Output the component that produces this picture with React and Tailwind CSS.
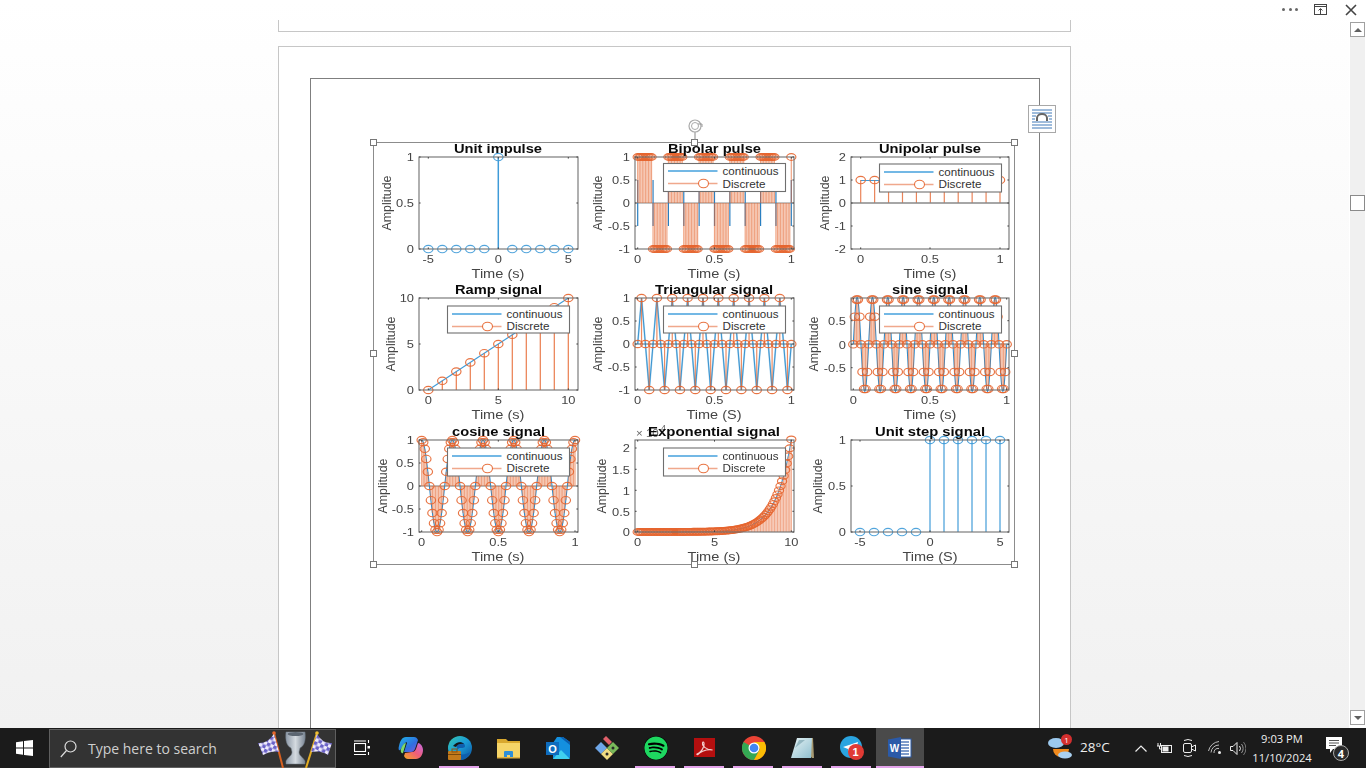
import React from "react";
import { FaSpotify } from "react-icons/fa";

const BLUE = "#3f9bd8";
const OR = "#e5652f";
const GREY = "#454545";
const range = (n, f) => Array.from({ length: n }, (_, i) => f(i));

function T({ x, y, len, size = 12, bold, anchor = "middle", fill = GREY, rot, sx, children }) {
  let transform;
  if (rot) transform = `translate(${x} ${y}) rotate(-90)`;
  else if (sx) transform = `translate(${x} ${y}) scale(${sx} 1)`;
  const zero = rot || sx;
  return (
    <text
      x={zero ? 0 : x}
      y={zero ? 0 : y}
      transform={transform}
      textLength={len}
      lengthAdjust={len ? "spacingAndGlyphs" : undefined}
      textAnchor={anchor}
      fontSize={size}
      fontWeight={bold ? 700 : 400}
      fill={fill}
      fontFamily="'Liberation Sans', Arial, sans-serif"
    >
      {children}
    </text>
  );
}

function Stems({ pts, base, color = OR, o = 0.6, rx = 4.7, ry = 3.7, w = 1.2, noStem }) {
  return (
    <g>
      {!noStem &&
        pts.map(([x, y], i) => (
          <line key={i} x1={x} x2={x} y1={base} y2={y} stroke={color} strokeWidth={w} strokeOpacity={o} />
        ))}
      {pts.map(([x, y], i) => (
        <ellipse key={"m" + i} cx={x} cy={y} rx={rx} ry={ry} fill="none" stroke={color} strokeWidth={1.15} strokeOpacity={0.9} />
      ))}
    </g>
  );
}

function Legend({ x, y, w = 122, h = 28, gap = 12.5 }) {
  const ly = Math.round(y + 7.5);
  return (
    <g>
      <rect x={x} y={y} width={w} height={h} fill="#fff" stroke="#6f6f6f" strokeWidth={1.1} />
      <line x1={x + 4.5} x2={x + 54} y1={ly} y2={ly} stroke="#45a0dc" strokeWidth={1.4} />
      <line x1={x + 4.5} x2={x + 54} y1={ly + gap} y2={ly + gap} stroke="#f0a88c" strokeWidth={1.4} />
      <ellipse cx={x + 40} cy={ly + gap} rx={5} ry={4.2} fill="#fff" stroke={OR} strokeOpacity={0.9} strokeWidth={1.1} />
      <T x={x + 59} y={y + 11.5} size={11} len={56} anchor="start" fill="#333">continuous</T>
      <T x={x + 59} y={y + 11.5 + gap} size={11} len={43} anchor="start" fill="#333">Discrete</T>
    </g>
  );
}

function Axes({ l, r, t, b, xt, yt, title, tLen, tc, tY, xLabel, xLen, xc, ampX, children }) {
  const W = r - l;
  return (
    <g>
      {children}
      <rect x={l} y={t} width={W} height={b - t} fill="none" stroke="#6f6f6f" strokeWidth={1.1} />
      {xt.map(([x], i) => (
        <g key={i}>
          <line x1={x} x2={x} y1={b} y2={b - 1.6} stroke="#444" />
          <line x1={x} x2={x} y1={t} y2={t + 1.6} stroke="#444" />
        </g>
      ))}
      {yt.map(([y], i) => (
        <g key={i}>
          <line x1={l} x2={l + 1.6} y1={y} y2={y} stroke="#444" />
          <line x1={r} x2={r - 1.6} y1={y} y2={y} stroke="#444" />
        </g>
      ))}
      {xt.map(([x, s], i) => (
        <T key={i} x={x} y={b + 14} size={11.5} sx={1.12}>{s}</T>
      ))}
      {yt.map(([y, s], i) => (
        <T key={i} x={l - 5} y={y + 4.2} size={11.5} sx={1.12} anchor="end">{s}</T>
      ))}
      <T x={tc} y={tY} size={12.5} bold len={tLen} fill="#0a0a0a">{title}</T>
      <T x={xc} y={b + 28.5} size={12.5} len={xLen}>{xLabel}</T>
      <T x={ampX} y={(t + b) / 2} size={12.8} len={55} rot>Amplitude</T>
    </g>
  );
}

const T01 = 153.6;
const col2x = (v) => 637.7 + v * T01;
const xt01c2 = [[637.7, "0"], [714.5, "0.5"], [791.3, "1"]];
const yt1 = (t) => [[t, "1"], [t + 23, "0.5"], [t + 46, "0"], [t + 69, "-0.5"], [t + 92, "-1"]];

function Figure() {
  const bip = range(101, (k) => [col2x(k / 100), k % 20 < 10 ? 157 : 249]);
  const tri = range(41, (k) => {
    const v = [0, 1, 0, -1][k % 4];
    return [col2x(k * 0.025), 344 - v * 46];
  });
  const sx = (v) => 853.3 + v * 153.4;
  const sin = range(101, (k) => [sx(k / 100), 344.3 - Math.sin(2 * Math.PI * 10 * (k / 100)) * 47]);
  const sinLine = range(401, (k) => [sx(k / 400), 344.3 - Math.sin(2 * Math.PI * 10 * (k / 400)) * 47]);
  const cx = (v) => 421.7 + v * 153.3;
  const cos = range(101, (k) => [cx(k / 100), 486 - Math.cos(2 * Math.PI * 5 * (k / 100)) * 46]);
  const cosLine = range(401, (k) => [cx(k / 400), 486 - Math.cos(2 * Math.PI * 5 * (k / 400)) * 46]);
  const ex = range(101, (k) => [637.7 + (k / 10) * 15.36, 532 - (Math.exp(k / 10) / 1e4) * 42]);
  const poly = (p) => p.map((q) => q.join(",")).join(" ");

  return (
    <svg viewBox="373 142 642 423" className="block w-full h-full blur-[0.3px]">
      <Axes l={419} r={578} t={157} b={249} tc={498} tY={153} title="Unit impulse" tLen={88}
        xt={[[428.3, "-5"], [498.3, "0"], [568.3, "5"]]} yt={[[157, "1"], [203, "0.5"], [249, "0"]]}
        xLabel="Time (s)" xLen={53} xc={498} ampX={390.5}>
        <Stems color={BLUE} noStem pts={range(11, (i) => [428.3 + i * 14, i === 5 ? 157 : 249])} />
        <line x1={498.3} x2={498.3} y1={157} y2={249} stroke={BLUE} strokeWidth={1.5} />
      </Axes>

      <Axes l={635} r={794} t={157} b={249} tc={714.5} tY={153} title="Bipolar pulse" tLen={93}
        xt={xt01c2} yt={yt1(157)} xLabel="Time (s)" xLen={53} xc={714} ampX={602}>
        <line x1={635} x2={794} y1={203} y2={203} stroke="#888" />
        {range(11, (i) => (
          <line key={i} x1={col2x(i / 10)} x2={col2x(i / 10)} y1={180} y2={226} stroke="#2a7fc0" strokeWidth={1.2} />
        ))}
        <Stems pts={bip} base={203} o={0.6} rx={4.6} ry={3.4} />
        <ellipse cx={676} cy={157} rx={4} ry={3} fill={OR} />
        <ellipse cx={752} cy={249} rx={3} ry={3} fill={OR} />
        <Legend x={663.5} y={163.5} />
      </Axes>

      <Axes l={851} r={1009} t={157} b={249} tc={930} tY={153} title="Unipolar pulse" tLen={102}
        xt={[[860.7, "0"], [930, "0.5"], [1000, "1"]]}
        yt={[[157, "2"], [180, "1"], [203, "0"], [226, "-1"], [249, "-2"]]}
        xLabel="Time (s)" xLen={53} xc={930} ampX={828.5}>
        <line x1={860.7} x2={1000} y1={180.5} y2={180.5} stroke={BLUE} />
        <Stems pts={range(11, (i) => [860.7 + i * 13.93, 180])} base={203} o={0.8} />
        <line x1={851} x2={1009} y1={203} y2={203} stroke="#888" strokeWidth={1.4} />
        <Legend x={879.5} y={164} />
      </Axes>

      <Axes l={419} r={578} t={298} b={390} tc={498.5} tY={294} title="Ramp signal" tLen={87}
        xt={[[428.3, "0"], [498.3, "5"], [568.3, "10"]]} yt={[[298, "10"], [344, "5"], [390, "0"]]}
        xLabel="Time (s)" xLen={53} xc={498} ampX={395}>
        <line x1={428.3} x2={568.3} y1={390} y2={298} stroke={BLUE} strokeWidth={1.1} />
        <Stems pts={range(11, (i) => [428.3 + i * 14, 390 - i * 9.2])} base={390} o={0.85} />
        <Legend x={447.5} y={306} h={27} />
      </Axes>

      <Axes l={635} r={794} t={298} b={390} tc={714} tY={294} title="Triangular signal" tLen={118}
        xt={xt01c2} yt={yt1(298)} xLabel="Time (S)" xLen={55} xc={714} ampX={602}>
        <polyline points={poly(tri)} fill="none" stroke="#a9d4ef" strokeWidth={1.8} />
        <polyline points={poly(tri)} fill="none" stroke="#2f8ccb" strokeWidth={0.9} />
        <line x1={635} x2={794} y1={344} y2={344} stroke="#4a6a80" />
        <Stems pts={tri} base={344} o={0.75} />
        <Legend x={663.5} y={306} h={27} />
      </Axes>

      <Axes l={851} r={1009} t={298} b={390} tc={930} tY={294} title="sine signal" tLen={76}
        xt={[[853.3, "0"], [930, "0.5"], [1006.7, "1"]]}
        yt={[[320.7, "0.5"], [344.3, "0"], [367.7, "-0.5"]]}
        xLabel="Time (s)" xLen={53} xc={930} ampX={818}>
        <polyline points={poly(sinLine)} fill="none" stroke="#2f8ccb" strokeWidth={1.1} />
        <line x1={851} x2={1009} y1={344} y2={344} stroke="#666" />
        <Stems pts={sin} base={344.3} o={0.6} />
        <Legend x={879.5} y={306} h={27} />
      </Axes>

      <Axes l={419} r={578} t={440} b={532} tc={498.5} tY={435.5} title="cosine signal" tLen={93}
        xt={[[421.7, "0"], [498.3, "0.5"], [575, "1"]]} yt={yt1(440)}
        xLabel="Time (s)" xLen={53} xc={498} ampX={386.5}>
        <polyline points={poly(cosLine)} fill="none" stroke="#2f8ccb" strokeWidth={1.1} />
        <line x1={419} x2={578} y1={486} y2={486} stroke="#777" />
        <Stems pts={cos} base={486} o={0.6} />
        <Legend x={447.5} y={448} />
      </Axes>

      <Axes l={635} r={794} t={440} b={532} tc={714} tY={435.5} title="Exponential signal" tLen={132}
        xt={[[637.7, "0"], [714.5, "5"], [791.3, "10"]]}
        yt={[[448, "2"], [469.3, "1.5"], [490.3, "1"], [511.3, "0.5"], [532, "0"]]}
        xLabel="Time (s)" xLen={53} xc={714} ampX={606}>
        <T x={636} y={437} size={11.5} anchor="start" fill="#666">× 10</T>
        <T x={661} y={431} size={9} anchor="start" fill="#666">4</T>
        <polyline points={poly(ex)} fill="none" stroke={BLUE} strokeWidth={1.1} />
        <Stems pts={ex} base={532} o={0.55} rx={4.6} ry={3.4} />
        <ellipse cx={675} cy={532} rx={3.5} ry={3.2} fill={OR} />
        <Legend x={663.5} y={448} />
      </Axes>

      <Axes l={851} r={1009} t={440} b={532} tc={930} tY={435.5} title="Unit step signal" tLen={110}
        xt={[[860, "-5"], [930, "0"], [1000, "5"]]} yt={[[440, "1"], [486, "0.5"], [532, "0"]]}
        xLabel="Time (S)" xLen={55} xc={930} ampX={822}>
        <Stems color={BLUE} o={0.9} base={532} pts={range(11, (i) => [860 + i * 14, i < 5 ? 532 : 440])} w={1.3} />
      </Axes>
    </svg>
  );
}

const handle = "absolute w-[7px] h-[7px] bg-white border border-[#777]";

function Picture() {
  return (
    <div className="relative w-[642px] h-[423px] border border-[#8c8c8c]">
      <div className="absolute -inset-px">
        <Figure />
      </div>
      <div className={handle + " -left-[4px] -top-[4px]"} />
      <div className={handle + " left-[317px] -top-[4px]"} />
      <div className={handle + " left-[637px] -top-[4px]"} />
      <div className={handle + " -left-[4px] top-[207px]"} />
      <div className={handle + " left-[637px] top-[207px]"} />
      <div className={handle + " -left-[4px] top-[418px]"} />
      <div className={handle + " left-[317px] top-[418px]"} />
      <div className={handle + " left-[637px] top-[418px]"} />
      <svg className="absolute left-[312px] -top-[25px]" width="18" height="22" viewBox="0 0 18 22" fill="none">
        <line x1="9" y1="14" x2="9" y2="22" stroke="#888" />
        <circle cx="9" cy="8" r="6" stroke="#aaa" strokeWidth="1.2" />
        <circle cx="9" cy="8" r="3.5" stroke="#aaa" />
        <path d="M12 6h4v3" stroke="#999" />
      </svg>
      <div className="absolute left-[654px] -top-[38px] w-[28px] h-[28px] bg-white border border-[#a8a8a8] flex items-center justify-center">
        <svg width="20" height="20" viewBox="0 0 20 20">
          {[1, 4, 13, 16, 19].map((y) => (
            <line key={y} x1="0" x2="20" y1={y} y2={y} stroke="#3f78b8" />
          ))}
          <line x1="0" x2="4" y1="7" y2="7" stroke="#3f78b8" />
          <line x1="16" x2="20" y1="7" y2="7" stroke="#3f78b8" />
          <line x1="0" x2="3" y1="10" y2="10" stroke="#3f78b8" />
          <line x1="17" x2="20" y1="10" y2="10" stroke="#3f78b8" />
          <path d="M5 12V9a5 4 0 0 1 10 0v3" fill="none" stroke="#666" strokeWidth="2" />
        </svg>
      </div>
    </div>
  );
}

function Scrollbar() {
  const btn = "w-[15px] h-[15px] bg-white border border-[#a0a0a0] flex items-center justify-center";
  return (
    <div className="w-[17px] pt-[22px] pb-[3px] pl-px pr-px flex flex-col bg-white">
      <div className="flex-1 bg-[#f0f0f0] flex flex-col">
        <div className={btn}>
          <div className="w-0 h-0 border-x-[4px] border-x-transparent border-b-[4px] border-b-[#606060]" />
        </div>
        <div className="mt-[158px] w-[15px] h-[16px] bg-white border border-[#8a8a8a]" />
        <div className="flex-1" />
        <div className={btn}>
          <div className="w-0 h-0 border-x-[4px] border-x-transparent border-t-[4px] border-t-[#606060]" />
        </div>
      </div>
    </div>
  );
}

function WinButtons() {
  return (
    <div className="absolute right-[9px] top-[3px] flex items-center">
      <div className="flex gap-[3.5px] mr-[16px]">
        <div className="w-[3px] h-[3px] rounded-full bg-[#666]" />
        <div className="w-[3px] h-[3px] rounded-full bg-[#666]" />
        <div className="w-[3px] h-[3px] rounded-full bg-[#666]" />
      </div>
      <svg className="mr-[17px]" width="14" height="13" viewBox="0 0 14 13" fill="none" stroke="#444">
        <rect x="0.5" y="1.5" width="12" height="10" />
        <line x1="0.5" y1="3.5" x2="12.5" y2="3.5" />
        <path d="M6.5 11V6M4.5 7.5l2-2 2 2" />
      </svg>
      <svg width="12" height="12" viewBox="0 0 12 12" stroke="#444" strokeWidth="1.6">
        <path d="M1 1l10 10M11 1L1 11" />
      </svg>
    </div>
  );
}

function Trophy() {
  return (
    <svg width="74" height="38" viewBox="0 0 74 38" className="shrink-0">
      <defs>
        <pattern id="chk" width="7" height="7" patternUnits="userSpaceOnUse" patternTransform="rotate(25)">
          <rect width="7" height="7" fill="#eeebfb" />
          <rect width="3.5" height="3.5" fill="#6a62c8" />
          <rect x="3.5" y="3.5" width="3.5" height="3.5" fill="#6a62c8" />
        </pattern>
        <linearGradient id="cup" x1="0" x2="1">
          <stop offset="0" stopColor="#8c98a6" />
          <stop offset="0.5" stopColor="#d4dae0" />
          <stop offset="1" stopColor="#7a8694" />
        </linearGradient>
      </defs>
      <line x1="16" y1="3" x2="25" y2="38" stroke="#d9601f" strokeWidth="2" />
      <circle cx="16" cy="3" r="1.8" fill="#e9662a" />
      <path d="M16 4 L21 22 Q13 20 5 25 L0 13 Q9 14 16 4Z" fill="url(#chk)" />
      <line x1="59" y1="3" x2="48" y2="38" stroke="#e2ac22" strokeWidth="2" />
      <circle cx="59" cy="3" r="1.8" fill="#f0c030" />
      <path d="M59 4 L53 22 Q63 20 70 25 L74 13 Q65 14 59 4Z" fill="url(#chk)" />
      <path d="M28 2h19c1 9-1 14-5 16l-1 4c0 4 4 5 6 9v3H28v-3c2-4 6-5 6-9l-1-4c-4-2-6-7-5-16z" fill="url(#cup)" stroke="#6d7884" strokeWidth="0.5" />
      <ellipse cx="37.500" cy="4" rx="8" ry="2" fill="#5c6672" />
    </svg>
  );
}

function Copilot() {
  return (
    <svg width="26" height="24" viewBox="0 0 26 24">
      <defs>
        <linearGradient id="cpa" x1="0" y1="0" x2="1" y2="1">
          <stop offset="0" stopColor="#1fb6e8" />
          <stop offset="0.6" stopColor="#2f6fe0" />
          <stop offset="1" stopColor="#7a5be0" />
        </linearGradient>
        <linearGradient id="cpb" x1="0" y1="1" x2="1" y2="0">
          <stop offset="0" stopColor="#f5a623" />
          <stop offset="0.5" stopColor="#ef5d78" />
          <stop offset="1" stopColor="#c46be8" />
        </linearGradient>
      </defs>
      <path d="M8 1h8c2 0 3 1 4 3l-3 9c-1 2-2 3-4 3H6l3-9C9 5 6 7 3 13c-2 3-3 0-2-3 1-5 3-9 7-9z" fill="url(#cpa)" />
      <path d="M18 23h-8c-2 0-3-1-4-3l1-3 7-1c2 0 3-1 4-3l2-6c2 0 5 3 5 7 0 5-3 9-7 9z" fill="url(#cpb)" />
      <path d="M3 13c1-3 3-6 5-6l-3 10c-1 1-3-1-2-4z" fill="#7fd96a" />
    </svg>
  );
}

function Edge() {
  return (
    <svg width="25" height="25" viewBox="0 0 25 25">
      <defs>
        <linearGradient id="edg" x1="0" y1="0" x2="1" y2="1">
          <stop offset="0" stopColor="#36c7b0" />
          <stop offset="0.5" stopColor="#1a9bd7" />
          <stop offset="1" stopColor="#0b4f9c" />
        </linearGradient>
      </defs>
      <circle cx="13" cy="12" r="12" fill="url(#edg)" />
      <path d="M9 8c3-3 9-2 9 2 0 2-3 2-5 2-3 0-3 4 0 6 3 1 7 0 10-2-1 4-5 8-10 8" fill="#0f5fae" />
      <path d="M6 10c3-4 8-5 11-2-3-1-7 0-8 3z" fill="#151515" />
      <rect x="1" y="15" width="13" height="9" rx="1" fill="#c47a1a" />
      <rect x="5" y="13" width="5" height="3" fill="none" stroke="#8a5410" />
      <rect x="1" y="18" width="13" height="1" fill="#7a4a0c" />
    </svg>
  );
}

function Folder() {
  return (
    <svg width="23" height="21" viewBox="0 0 23 21">
      <path d="M0 1h9l2 2h12v17H0z" fill="#d9a82e" />
      <rect x="0" y="5" width="23" height="15" fill="#f6d568" />
      <path d="M7 20v-6a1 1 0 0 1 1-1h7a1 1 0 0 1 1 1v6h-3v-3h-3v3z" fill="#2f8fd8" />
      <rect x="0" y="19" width="23" height="1.5" fill="#e0b040" />
    </svg>
  );
}

function Outlook() {
  return (
    <svg width="24" height="23" viewBox="0 0 24 23">
      <path d="M11 0h6l7 5v15a2 2 0 0 1-2 2H7V6z" fill="#1490df" />
      <path d="M14 0h3l7 5v3z" fill="#0a5fb0" />
      <path d="M7 22l8-9 9 9z" fill="#3fd0ef" />
      <rect x="0" y="5" width="13" height="13" fill="#0f6cbd" />
      <text x="6.5" y="15.5" textAnchor="middle" fontSize="11" fontWeight="700" fill="#fff" fontFamily="'Liberation Sans', sans-serif">O</text>
    </svg>
  );
}

function Tiles() {
  return (
    <svg width="24" height="24" viewBox="0 0 24 24">
      <path d="M6 6l6 6-6 6-6-6z" fill="#6ea6e8" />
      <path d="M12 12l6 6-6 6-6-6z" fill="#f0dc82" />
      <path d="M18 6l6 6-6 6-6-6z" fill="#7ab85a" />
      <path d="M8 3l3-3 6 6-3 3z" fill="#e0606a" />
      <circle cx="18" cy="12" r="1.5" fill="#2a2a2a" />
      <circle cx="12" cy="18" r="1.5" fill="#2a2a2a" />
    </svg>
  );
}

function Acrobat() {
  return (
    <svg width="22" height="20" viewBox="0 0 22 20">
      <rect width="21" height="19" fill="#b40f0f" />
      <path d="M3 16c3-1 6-5 7-9 .5-3-1-4-1.5-2-.5 3 4 7 10 7-3-1-9 0-13 3-2 2-3 2-2.500 1z" fill="none" stroke="#f3d0d0" strokeWidth="1.1" />
    </svg>
  );
}

function Chrome() {
  return (
    <svg width="24" height="24" viewBox="0 0 24 24">
      <circle cx="12" cy="12" r="12" fill="#ea4335" />
      <path d="M12 12 L1.600 6 A12 12 0 0 0 12 24 L18 13z" fill="#34a853" />
      <path d="M12 6 H22.400 A12 12 0 0 1 12 24 L18 13z" fill="#fbbc04" />
      <circle cx="12" cy="12" r="5.500" fill="#fff" />
      <circle cx="12" cy="12" r="4.300" fill="#4285f4" />
    </svg>
  );
}

function Notes() {
  return (
    <svg width="24" height="22" viewBox="0 0 24 22">
      <defs>
        <linearGradient id="nt" x1="0" y1="0" x2="1" y2="1">
          <stop offset="0" stopColor="#e7f3f5" />
          <stop offset="1" stopColor="#8fbfcf" />
        </linearGradient>
      </defs>
      <path d="M6 1h16l1 20-2 0z" fill="#a79a72" />
      <path d="M6 1h15l-1 20H0z" fill="url(#nt)" />
      <path d="M4 11L8 3h6z" fill="#5f8d9c" fillOpacity="0.5" />
    </svg>
  );
}

function Telegram() {
  return (
    <div className="relative w-[24px] h-[24px]">
      <svg width="22" height="22" viewBox="0 0 22 22">
        <circle cx="11" cy="11" r="11" fill="#2aa4e0" />
        <path d="M3 11l15-5-3 12-4-3-2 2-1-4z" fill="#fff" />
      </svg>
      <div className="absolute left-[8px] top-[8px] w-[16px] h-[16px] rounded-full bg-[#e03a34] text-white text-[11px] font-bold flex items-center justify-center font-['Liberation_Sans']">1</div>
    </div>
  );
}

function Word() {
  return (
    <svg width="24" height="22" viewBox="0 0 24 22">
      <rect x="10" y="2" width="13" height="18" fill="#fff" stroke="#2b5aa8" />
      {[5, 8, 11, 14, 17].map((y) => (
        <line key={y} x1="13" x2="21" y1={y} y2={y} stroke="#2b5aa8" strokeWidth="1.2" />
      ))}
      <path d="M0 2.500L13 0v22L0 19.500z" fill="#2b5aa8" />
      <text x="6.500" y="15" textAnchor="middle" fontSize="10" fontWeight="700" fill="#fff" fontFamily="'Liberation Sans', sans-serif">W</text>
    </svg>
  );
}

function TaskBtn({ on, active, children, w = "w-[49px]" }) {
  return (
    <div className={"relative h-10 flex items-center justify-center shrink-0 " + w + (active ? " bg-[#4a4a4a]" : "")}>
      {children}
      {on && <div className={"absolute bottom-0 h-[2px] bg-[#e3a3ea] " + (active ? "inset-x-0" : "left-[4px] right-[5px]")} />}
    </div>
  );
}

function Taskbar() {
  return (
    <div className="h-10 shrink-0 bg-[#1b1b1b] flex items-center text-white font-['Open_Sans',sans-serif]">
      <div className="w-[49px] h-10 flex items-center justify-center shrink-0">
        <svg width="17" height="16" viewBox="0 0 17 16" fill="#fff">
          <path d="M0 2.300L7 1.300V7.500H0zM8 1.100L17 0V7.500H8zM0 8.500H7V14.700L0 13.700zM8 8.500H17V16L8 14.900z" />
        </svg>
      </div>
      <div className="w-[287px] h-[39px] mt-px shrink-0 bg-[#333333] border border-[#5f5f5f] flex items-center">
        <svg className="ml-[10px]" width="17" height="18" viewBox="0 0 17 18" fill="none" stroke="#ddd" strokeWidth="1.2">
          <circle cx="10.500" cy="6.500" r="5.500" />
          <line x1="6.500" y1="10.500" x2="0.800" y2="17" />
        </svg>
        <span className="ml-[11px] text-[14px] leading-none text-[#cfcfcf] flex-1 whitespace-nowrap">Type here to search</span>
        <Trophy />
        <div className="w-[3px]" />
      </div>
      <div className="w-px" />
      <TaskBtn>
        <svg width="16" height="16" viewBox="0 0 16 16" fill="none" stroke="#fff" strokeWidth="1.100">
          <rect x="0.500" y="3.500" width="11" height="8" />
          <path d="M0 1h12M0 14.500h12" />
          <path d="M14.500 0v3M14.500 12v3" />
          <rect x="13.500" y="6" width="2.500" height="2.500" fill="#fff" stroke="none" />
        </svg>
      </TaskBtn>
      <TaskBtn><Copilot /></TaskBtn>
      <TaskBtn on><Edge /></TaskBtn>
      <TaskBtn><Folder /></TaskBtn>
      <TaskBtn><Outlook /></TaskBtn>
      <TaskBtn><Tiles /></TaskBtn>
      <TaskBtn on><FaSpotify size={24} color="#1ed760" className="bg-black rounded-full" /></TaskBtn>
      <TaskBtn on><Acrobat /></TaskBtn>
      <TaskBtn on><Chrome /></TaskBtn>
      <TaskBtn on><Notes /></TaskBtn>
      <TaskBtn on><Telegram /></TaskBtn>
      <TaskBtn on active w="w-[48px]"><Word /></TaskBtn>

      <div className="flex-1" />

      <div className="relative w-[26px] h-[24px] shrink-0">
        <svg width="25" height="24" viewBox="0 0 25 24">
          <path d="M5 13a8 8 0 0 0 16 0z" fill="#f08a1d" />
          <ellipse cx="8" cy="7" rx="8" ry="5" fill="#9cc9ee" />
          <ellipse cx="17" cy="19" rx="7" ry="3.500" fill="#a9d0f0" />
        </svg>
        <div className="absolute left-[13px] -top-[2px] w-[11px] h-[11px] rounded-full bg-[#d32f2f] text-[8px] flex items-center justify-center leading-none">1</div>
      </div>
      <span className="ml-[6px] text-[13.5px] w-[55px] shrink-0 leading-none text-[#eee]">28°C</span>
      <svg className="shrink-0" width="12" height="7" viewBox="0 0 12 7" fill="none" stroke="#eee" strokeWidth="1.200"><path d="M0.500 6.500L6 1l5.500 5.500" /></svg>
      <svg className="ml-[10px] shrink-0" width="16" height="11" viewBox="0 0 16 11" fill="none" stroke="#eee">
        <rect x="4.500" y="2.500" width="10" height="7" />
        <rect x="5.500" y="3.500" width="6" height="5" fill="#eee" stroke="none" />
        <path d="M1 0v3M3.500 0v3M0 3h5M2.500 3v3h2" />
      </svg>
      <svg className="ml-[10px] shrink-0" width="13" height="20" viewBox="0 0 13 20" fill="none" stroke="#eee">
        <rect x="0.500" y="5.500" width="8" height="9" rx="1.500" />
        <path d="M8.500 9l4-2v6l-4-2" />
        <path d="M1 2.500q4-2 8 0M1 17.500q4 2 8 0" />
      </svg>
      <svg className="ml-[12px] shrink-0" width="14" height="14" viewBox="0 0 14 14" fill="none" stroke="#bbb">
        <path d="M0.500 10A12 12 0 0 1 11 0.500M3 11.500A8 8 0 0 1 11 4M6 12A4 4 0 0 1 11 7.500" />
        <circle cx="11.500" cy="11.500" r="1.500" fill="#eee" stroke="none" />
      </svg>
      <svg className="ml-[8px] shrink-0" width="16" height="15" viewBox="0 0 16 15" fill="none" stroke="#eee">
        <path d="M0.500 5.500h2.500L7 1.500v12L3 9.500H0.500z" />
        <path d="M9.500 5a4 4 0 0 1 0 5" />
        <path d="M11.500 3a7 7 0 0 1 0 9" stroke="#999" />
        <path d="M13.500 1a10 10 0 0 1 0 13" stroke="#777" />
      </svg>
      <div className="ml-[7px] w-[58px] shrink-0 flex flex-col items-center text-[11.2px] leading-[19px] text-[#eee]">
        <span>9:03 PM</span>
        <span className="whitespace-nowrap">11/10/2024</span>
      </div>
      <div className="relative ml-[15px] mr-[20px] w-[20px] h-[24px] shrink-0">
        <svg width="17" height="17" viewBox="0 0 17 17" className="absolute left-0 top-[1px]">
          <path d="M0 0h16v12H7l-3 4v-4H0z" fill="#fff" />
          <path d="M3 3.500h10M3 6h10M3 8.500h7" stroke="#555" />
        </svg>
        <div className="absolute left-[7px] top-[9px] w-[16px] h-[16px] rounded-full border border-[#aaa] bg-[#2b2b2b] text-[11px] font-bold flex items-center justify-center leading-none">4</div>
      </div>
    </div>
  );
}

export default function App() {
  return (
    <div className="w-[1366px] h-[768px] overflow-hidden flex flex-col">
      <div className="flex-1 min-h-0 flex relative">
        <div className="flex-1 min-w-0 flex flex-col pt-[20px] pl-[278px] bg-linear-to-b from-white to-[#f1f1f1]">
          <div className="w-[793px] h-[12px] shrink-0 bg-white border-x border-b border-[#c6c6c6]" />
          <div className="w-[793px] flex-1 mt-[14px] bg-white border-x border-t border-[#c6c6c6] pt-[31px] pl-[31px]">
            <div className="w-[730px] h-full border-x border-t border-[#7f7f7f] pt-[63px] pl-[62px]">
              <Picture />
            </div>
          </div>
        </div>
        <Scrollbar />
        <WinButtons />
      </div>
      <Taskbar />
    </div>
  );
}
